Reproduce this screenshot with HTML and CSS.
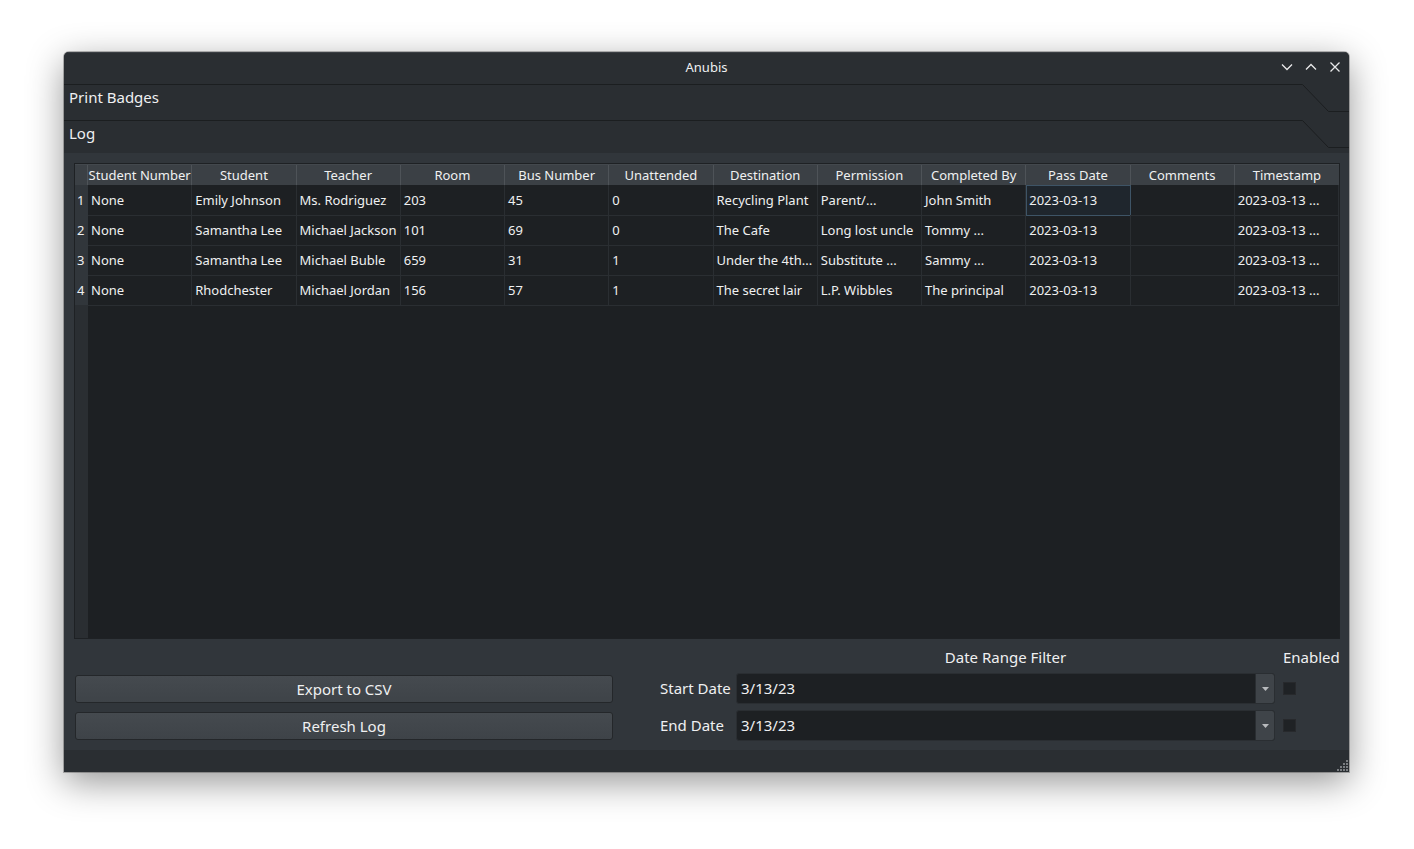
FILE: index.html
```html
<!DOCTYPE html>
<html>
<head>
<meta charset="utf-8">
<title>Anubis</title>
<link rel="stylesheet" href="styles.css">
</head>
<body>
<div class="window">
  <div class="titlebar">
    <div class="title">Anubis</div>
    <div class="winbtns">
      <svg width="14" height="14" viewBox="0 0 14 14"><path d="M2 4.5 L7 9.5 L12 4.5" fill="none" stroke="#e8e9ea" stroke-width="1.3"/></svg>
      <svg width="14" height="14" viewBox="0 0 14 14"><path d="M2 9.5 L7 4.5 L12 9.5" fill="none" stroke="#e8e9ea" stroke-width="1.3"/></svg>
      <svg width="14" height="14" viewBox="0 0 14 14"><path d="M2.5 2.5 L11.5 11.5 M11.5 2.5 L2.5 11.5" fill="none" stroke="#e8e9ea" stroke-width="1.3"/></svg>
    </div>
  </div>
  <div class="tab tab-first">
    <div class="tab-label">Print Badges</div>
    <svg class="notch" width="47" height="29" viewBox="0 0 47 29"><path d="M0 0.5 H0.5 L26.5 27.5 H47" fill="none" stroke="#1b1e20" stroke-width="1"/></svg>
  </div>
  <div class="tab tab-second">
    <div class="tab-label">Log</div>
    <svg class="notch" width="47" height="29" viewBox="0 0 47 29"><path d="M0 0.5 H0.5 L26.5 27.5 H47" fill="none" stroke="#1b1e20" stroke-width="1"/></svg>
  </div>
  <div class="content">
    <div class="table">
      <div class="grid thead">
        <div class="corner"></div>
        <div class="th">Student Number</div>
        <div class="th">Student</div>
        <div class="th">Teacher</div>
        <div class="th">Room</div>
        <div class="th">Bus Number</div>
        <div class="th">Unattended</div>
        <div class="th">Destination</div>
        <div class="th">Permission</div>
        <div class="th">Completed By</div>
        <div class="th">Pass Date</div>
        <div class="th">Comments</div>
        <div class="th last">Timestamp</div>
      </div>
      <div class="grid trow">
        <div class="vh">1</div>
        <div class="td">None</div><div class="td">Emily Johnson</div><div class="td">Ms. Rodriguez</div><div class="td">203</div><div class="td">45</div><div class="td">0</div><div class="td">Recycling Plant</div><div class="td">Parent/...</div><div class="td">John Smith</div><div class="td sel">2023-03-13</div><div class="td"></div><div class="td">2023-03-13 ...</div>
      </div>
      <div class="grid trow">
        <div class="vh">2</div>
        <div class="td">None</div><div class="td">Samantha Lee</div><div class="td">Michael Jackson</div><div class="td">101</div><div class="td">69</div><div class="td">0</div><div class="td">The Cafe</div><div class="td">Long lost uncle</div><div class="td">Tommy ...</div><div class="td">2023-03-13</div><div class="td"></div><div class="td">2023-03-13 ...</div>
      </div>
      <div class="grid trow">
        <div class="vh">3</div>
        <div class="td">None</div><div class="td">Samantha Lee</div><div class="td">Michael Buble</div><div class="td">659</div><div class="td">31</div><div class="td">1</div><div class="td">Under the 4th...</div><div class="td">Substitute ...</div><div class="td">Sammy ...</div><div class="td">2023-03-13</div><div class="td"></div><div class="td">2023-03-13 ...</div>
      </div>
      <div class="grid trow">
        <div class="vh">4</div>
        <div class="td">None</div><div class="td">Rhodchester</div><div class="td">Michael Jordan</div><div class="td">156</div><div class="td">57</div><div class="td">1</div><div class="td">The secret lair</div><div class="td">L.P. Wibbles</div><div class="td">The principal</div><div class="td">2023-03-13</div><div class="td"></div><div class="td">2023-03-13 ...</div>
      </div>
      <div class="filler"><div class="vh-fill"></div><div class="body-fill"></div></div>
    </div>
    <div class="controls">
      <div class="range-title">Date Range Filter</div>
      <div class="enabled-title">Enabled</div>
      <button class="btn btn-1">Export to CSV</button>
      <div class="lbl lbl-1">Start Date</div>
      <div class="combo combo-1"><span class="combo-val">3/13/23</span><span class="combo-arrow"><svg width="7" height="4" viewBox="0 0 7 4"><path d="M0 0 H7 L3.5 4 Z" fill="#b8babd"/></svg></span></div>
      <div class="check check-1"></div>
      <button class="btn btn-2">Refresh Log</button>
      <div class="lbl lbl-2">End Date</div>
      <div class="combo combo-2"><span class="combo-val">3/13/23</span><span class="combo-arrow"><svg width="7" height="4" viewBox="0 0 7 4"><path d="M0 0 H7 L3.5 4 Z" fill="#b8babd"/></svg></span></div>
      <div class="check check-2"></div>
    </div>
  </div>
  <div class="statusbar">
    <svg class="grip" width="11" height="11" viewBox="0 0 11 11">
      <g fill="#7a7d81">
        <rect x="9" y="0" width="2" height="2"/>
        <rect x="6" y="3" width="2" height="2"/><rect x="9" y="3" width="2" height="2"/>
        <rect x="3" y="6" width="2" height="2"/><rect x="6" y="6" width="2" height="2"/><rect x="9" y="6" width="2" height="2"/>
        <rect x="0" y="9" width="2" height="2"/><rect x="3" y="9" width="2" height="2"/><rect x="6" y="9" width="2" height="2"/><rect x="9" y="9" width="2" height="2"/>
      </g>
    </svg>
  </div>
</div>
</body>
</html>
```
FILE: styles.css
```css
* { box-sizing: border-box; }
html, body { margin: 0; padding: 0; }
body {
  background: #ffffff;
  padding: 52px 0 0 64px;
  min-height: 849px;
  font-family: "Noto Sans", "DejaVu Sans", sans-serif;
  color: #eff0f1;
}
.window {
  width: 1285px;
  height: 720px;
  display: flex;
  flex-direction: column;
  background: #2a2e32;
  border-radius: 5px 5px 0 0;
  box-shadow: 0 10px 36px rgba(0,0,0,0.42), 0 0 0 1px rgba(0,0,0,0.25);
  overflow: hidden;
}
.titlebar {
  height: 32px;
  flex: none;
  display: flex;
  align-items: center;
  justify-content: center;
  position: relative;
  background: #2a2e32;
  border-top: 1px solid #3a3e43;
}
.title { font-size: 13px; color: #eff0f1; margin-top: -4px; }
.winbtns {
  position: absolute;
  right: 7px;
  top: 7px;
  display: flex;
  gap: 10px;
}
.winbtns svg { display: block; }
.tab {
  display: flex;
  flex: none;
  background: #2a2e32;
}
.tab-first { height: 36px; }
.tab-second { height: 33px; }
.tab-label {
  flex: 1;
  border-top: 1px solid #1b1e20;
  padding-left: 5px;
  font-size: 15px;
  line-height: 24px;
}
.notch { flex: none; display: block; }
.content {
  flex: 1;
  background: #31363b;
  padding: 10px 9px 0 10px;
  display: flex;
  flex-direction: column;
}
.table {
  height: 476px;
  flex: none;
  border: 1px solid #1e2124;
  background: #1d2023;
  display: flex;
  flex-direction: column;
}
.grid {
  display: grid;
  grid-template-columns: 13px repeat(12, 1fr);
}
.thead {
  height: 21px;
  background: #3b4045;
  border-top: 1px solid #43484d;
}
.corner { background: #3b4045; border-right: 1px solid #4e5358; }
.th {
  font-size: 13px;
  line-height: 20px;
  text-align: center;
  border-right: 1px solid #4e5358;
  white-space: nowrap;
  overflow: hidden;
  color: #eff0f1;
}
.th.last { border-right: none; }
.trow { height: 30px; }
.vh {
  background: #31363b;
  border-bottom: 1px solid #1e2124;
  font-size: 13px;
  line-height: 29px;
  padding-left: 2px;
  padding-top: 1px;
  color: #eff0f1;
}
.td {
  font-size: 13px;
  line-height: 28px;
  padding-left: 3px;
  padding-top: 1px;
  border-right: 1px solid #2a2e32;
  border-bottom: 1px solid #2a2e32;
  white-space: nowrap;
  overflow: hidden;
  color: #eff0f1;
}
.td.sel {
  border: 1px solid #3e5466;
  background: #1f262d;
  line-height: 26px;
  padding-left: 2px;
}
.filler { flex: 1; display: flex; }
.vh-fill { width: 13px; background: #2a2e32; }
.body-fill { flex: 1; }
.controls {
  display: grid;
  grid-template-columns: 538px 46px 77px 539px 8px 56px;
  grid-template-rows: 19px 31px 31px;
  row-gap: 6px;
  padding: 9px 0 9px 1px;
  font-size: 15px;
}
.range-title { grid-column: 4; grid-row: 1; text-align: center; line-height: 19px; }
.enabled-title { grid-column: 6; grid-row: 1; text-align: right; line-height: 19px; }
.btn {
  grid-column: 1;
  height: 28px;
  align-self: center;
  margin: 0;
  font-family: inherit;
  font-size: 15px;
  color: #eff0f1;
  background: linear-gradient(#454a4f, #3e4348);
  border: 1px solid #24272a;
  border-radius: 3px;
  padding: 0;
}
.btn-1 { grid-row: 2; }
.btn-2 { grid-row: 3; }
.lbl { grid-column: 3; line-height: 31px; padding-left: 1px; }
.lbl-1 { grid-row: 2; }
.lbl-2 { grid-row: 3; }
.combo {
  grid-column: 4;
  display: flex;
  background: #1d2023;
  border: 1px solid #2a2e32;
  border-radius: 3px;
}
.combo-1 { grid-row: 2; }
.combo-2 { grid-row: 3; }
.combo-val { flex: 1; padding-left: 4px; line-height: 29px; font-size: 15px; }
.combo-arrow {
  width: 19px;
  display: flex;
  align-items: center;
  justify-content: center;
  background: #3f4449;
  border-left: 1px solid #2a2e32;
  border-radius: 0 2px 2px 0;
}
.combo-arrow svg { display: block; }
.check {
  grid-column: 6;
  width: 13px;
  height: 13px;
  align-self: center;
  background: #1f2225;
  border: 1px solid #27292c;
}
.check-1 { grid-row: 2; }
.check-2 { grid-row: 3; }
.statusbar {
  height: 22px;
  flex: none;
  background: #2a2e32;
  display: flex;
  justify-content: flex-end;
  align-items: flex-end;
  padding: 0 1px 1px 0;
}
.grip { display: block; }
```
